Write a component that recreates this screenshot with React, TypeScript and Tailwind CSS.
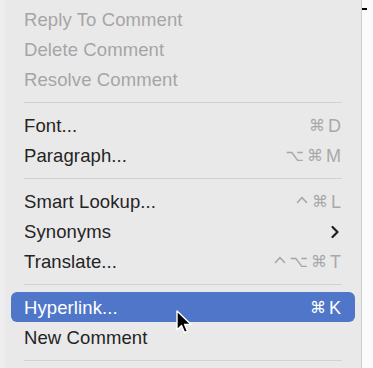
import React from "react";

type Item =
  | { kind: "sep" }
  | { kind: "item"; label: string; disabled?: boolean; shortcut?: string; submenu?: boolean; active?: boolean };

const items: Item[] = [
  { kind: "item", label: "Reply To Comment", disabled: true },
  { kind: "item", label: "Delete Comment", disabled: true },
  { kind: "item", label: "Resolve Comment", disabled: true },
  { kind: "sep" },
  { kind: "item", label: "Font...", shortcut: "⌘D" },
  { kind: "item", label: "Paragraph...", shortcut: "⌥⌘M" },
  { kind: "sep" },
  { kind: "item", label: "Smart Lookup...", shortcut: "⌃⌘L" },
  { kind: "item", label: "Synonyms", submenu: true },
  { kind: "item", label: "Translate...", shortcut: "⌃⌥⌘T" },
  { kind: "sep" },
  { kind: "item", label: "Hyperlink...", shortcut: "⌘K", active: true },
  { kind: "item", label: "New Comment" },
  { kind: "sep" },
];

function Shortcut({ text, active }: { text: string; active?: boolean }) {
  const color = active ? "#ffffff" : "#a9a8a9";
  return (
    <span
      className={`flex items-center gap-[3px] text-[18px] ${active ? "text-white" : "text-[#a9a8a9]"}`}
      style={{ fontFamily: '"Liberation Sans", "DejaVu Sans", sans-serif' }}
    >
      {Array.from(text).map((c, i) =>
        c === "⌃" ? (
          <svg key={i} width="12" height="10" viewBox="0 0 12 10" className="mr-[1px] -mt-[4px]">
            <path d="M1.5 7.5 L6 2.5 L10.5 7.5" fill="none" stroke={color} strokeWidth="1.6" strokeLinecap="round" strokeLinejoin="round" />
          </svg>
        ) : c === "⌘" || c === "⌥" ? (
          <span key={i} className="text-[16px]" style={{ fontFamily: '"DejaVu Sans", sans-serif' }}>
            {c}
          </span>
        ) : (
          <span key={i}>{c}</span>
        )
      )}
    </span>
  );
}

export default function App() {
  return (
    <div
      className="relative flex w-[373px] h-[368px] overflow-hidden bg-white"
      style={{ fontFamily: '"Liberation Sans", Arial, sans-serif' }}
    >
      <div className="w-[5px] h-full bg-[#efeeef]" />
      <div className="w-[357px] h-full bg-[#eae9ea] border-r border-[#cfcecf] pt-[4px] flex flex-col">
        {items.map((it, i) =>
          it.kind === "sep" ? (
            <div key={i} className="h-[16px] flex items-center px-[19px] shrink-0">
              <div className="h-[1px] w-full bg-[#d3d2d3]" />
            </div>
          ) : (
            <div key={i} className="h-[30px] px-[6px] shrink-0">
              <div
                className={`h-[30px] flex items-center justify-between pt-[2px] pl-[13px] pr-[14px] rounded-[6px] ${
                  it.active ? "bg-[#5076c9] text-white" : it.disabled ? "text-[#a6a5a6]" : "text-[#242424]"
                }`}
              >
                <span className="text-[18.5px] tracking-[0.1px]">{it.label}</span>
                {it.shortcut && <Shortcut text={it.shortcut} active={it.active} />}
                {it.submenu && (
                  <svg width="10" height="14" viewBox="0 0 10 14" className="mr-[1px]">
                    <path d="M2.5 2 L7.5 7 L2.5 12" fill="none" stroke="#1e1e1e" strokeWidth="2.2" strokeLinecap="round" strokeLinejoin="round" />
                  </svg>
                )}
              </div>
            </div>
          )
        )}
      </div>
      <div className="flex-1 h-full bg-[#fbfbfb]" />
      <div className="absolute left-[362px] top-[8px] w-[5px] h-[2px] bg-black" />
      <svg className="absolute left-[175px] top-[310px]" width="20" height="26" viewBox="0 0 20 26">
        <path d="M2 1 L2 20 L6.5 15.5 L9.5 22.5 L12.5 21.2 L9.6 14.4 L16 14.4 Z" fill="#000" stroke="#fff" strokeWidth="1.4" strokeLinejoin="round" />
      </svg>
    </div>
  );
}
